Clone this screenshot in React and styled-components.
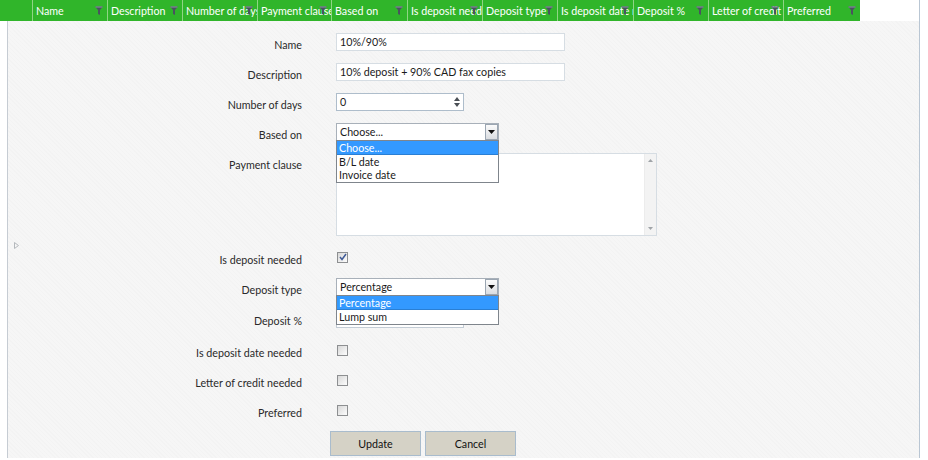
import React from "react";
import styled, { createGlobalStyle } from "styled-components";

const Global = createGlobalStyle`
  html, body { margin: 0; padding: 0; background: #ffffff; }
  body { font-family: Lato, "Open Sans", sans-serif; font-size: 10.7px; color: #222; }
`;

const Frame = styled.div`
  width: 919px;
  height: 458px;
  border-right: 1px solid #b9c6d3;
  display: flex;
  flex-direction: column;
`;

const HeaderBar = styled.div`
  display: flex;
  height: 21px;
  width: 860px;
  background: #30b52a;
  flex: none;
`;

const HeaderCell = styled.div`
  position: relative;
  width: ${(p) => p.$w}px;
  box-sizing: border-box;
  border-left: ${(p) => (p.$first ? "none" : "1px solid #8fd585")};
  color: #ffffff;
  padding-left: 3px;
  line-height: 21px;
  white-space: nowrap;
  overflow: hidden;
  font-size: 10.7px;
`;

const FilterIcon = styled.svg`
  position: absolute;
  right: 4px;
  top: 6px;
  width: 8px;
  height: 9px;
`;

const Panel = styled.div`
  flex: 1;
  margin-left: 7px;
  border-left: 1px solid #c6ccd3;
  background-color: #f6f6f6;
  background-image: repeating-linear-gradient(45deg, rgba(0,0,0,0.012) 0 1px, transparent 1px 3px);
  display: flex;
`;

const Gutter = styled.div`
  width: 20px;
  flex: none;
  padding-top: 221px;
  padding-left: 6px;
  box-sizing: border-box;
`;

const Expander = styled.svg`
  width: 5px;
  height: 7px;
  display: block;
`;

const Form = styled.div`
  display: flex;
  flex-direction: column;
  padding-top: 6px;
`;

const Row = styled.div`
  display: flex;
  align-items: ${(p) => (p.$top ? "flex-start" : "center")};
  height: ${(p) => p.$h || 30}px;
  gap: 34px;
`;

const Label = styled.div`
  width: 274px;
  text-align: right;
  line-height: 14px;
  padding-top: 5px;
  margin-top: ${(p) => p.$mt || 0}px;
  color: #2a2a2a;
  white-space: nowrap;
`;

const Field = styled.div`
  position: relative;
  width: ${(p) => p.$w}px;
  height: ${(p) => p.$h || 18}px;
  box-sizing: border-box;
  border: 1px solid ${(p) => p.$border || "#d6dde3"};
  background: #fff;
  padding-left: 3px;
  line-height: 16px;
  color: #1a1a1a;
  margin-top: ${(p) => p.$mt || 0}px;
`;

const Spinner = styled.svg`
  position: absolute;
  right: 3px;
  top: 2px;
  width: 6px;
  height: 12px;
`;

const SelectWrap = styled.div`
  position: relative;
  width: 163px;
  height: 18px;
`;

const SelectBox = styled.div`
  height: 18px;
  box-sizing: border-box;
  border: 1px solid #a8b0b9;
  background: #fff;
  padding-left: 3px;
  line-height: 16px;
  color: #1a1a1a;
`;

const ArrowBtn = styled.div`
  position: absolute;
  right: 1px;
  top: 1px;
  width: 13px;
  height: 16px;
  box-sizing: border-box;
  border: 1px solid #9ba6b2;
  background: linear-gradient(#fbfbfb, #dadde1);
  display: flex;
  align-items: center;
  justify-content: center;
`;

const DropList = styled.div`
  position: absolute;
  left: 0;
  top: 17px;
  width: 163px;
  box-sizing: border-box;
  border: 1px solid #7f858c;
  background: #fff;
  z-index: 5;
  padding-bottom: 1px;
`;

const Option = styled.div`
  height: 13px;
  line-height: 13px;
  padding-left: 2px;
  background: ${(p) => (p.$active ? "#3399ff" : "transparent")};
  color: ${(p) => (p.$active ? "#fff" : "#1a1a1a")};
  border-bottom: ${(p) => (p.$active ? "1px solid #2a7fd4" : "none")};
`;

const TextArea = styled.div`
  width: 321px;
  height: 83px;
  box-sizing: border-box;
  border: 1px solid #d6dde3;
  background: #fff;
  margin-top: 6px;
  display: flex;
  justify-content: flex-end;
`;

const ScrollBar = styled.div`
  width: 11px;
  background: #f3f3f3;
  border-left: 1px solid #ececec;
  display: flex;
  flex-direction: column;
  justify-content: space-between;
  align-items: center;
  padding: 5px 0;
`;

const Check = styled.div`
  width: 11px;
  height: 11px;
  box-sizing: border-box;
  margin-left: 1px;
  border: 1px solid #8d8f91;
  background: linear-gradient(135deg, #d8d8d8, #fdfdfd);
  display: flex;
  align-items: center;
  justify-content: center;
`;

const ButtonRow = styled.div`
  display: flex;
  gap: 4px;
  margin-top: 6px;
  margin-left: 302px;
`;

const Button = styled.button`
  width: 91px;
  height: 25px;
  border: 1px solid #a9bccd;
  background: #d5d2c6;
  font-family: Lato, "Open Sans", sans-serif;
  font-size: 10.7px;
  color: #111;
  padding: 0;
`;

const columns = [
  { t: "", w: 32 },
  { t: "Name", w: 75 },
  { t: "Description", w: 75 },
  { t: "Number of days", w: 75 },
  { t: "Payment clause", w: 74 },
  { t: "Based on", w: 76 },
  { t: "Is deposit needed", w: 75 },
  { t: "Deposit type", w: 75 },
  { t: "Is deposit date needed", w: 76 },
  { t: "Deposit %", w: 75 },
  { t: "Letter of credit needed", w: 75 },
  { t: "Preferred", w: 77 },
];

const Funnel = () => (
  <FilterIcon viewBox="0 0 8 9">
    <path d="M0 0.5 H8 L5 4 V9 L3 8 V4 Z" fill="#4a5360" />
    <path d="M0.5 1 H7.5" stroke="#8a95a2" strokeWidth="1" />
  </FilterIcon>
);

const Arrow = () => (
  <svg width="7" height="4" viewBox="0 0 7 4">
    <path d="M0 0 H7 L3.5 4 Z" fill="#111" />
  </svg>
);

const CheckMark = () => (
  <svg width="8" height="8" viewBox="0 0 8 8">
    <path d="M1 4 L3 6.5 L7 1" fill="none" stroke="#3f5a96" strokeWidth="1.5" />
  </svg>
);

const Tri = ({ up }) => (
  <svg width="5" height="3" viewBox="0 0 5 3">
    <path d={up ? "M0 3 H5 L2.5 0 Z" : "M0 0 H5 L2.5 3 Z"} fill="#a0a4a8" />
  </svg>
);

export default function App() {
  return (
    <>
      <Global />
      <Frame>
        <HeaderBar>
          {columns.map((c, i) => (
            <HeaderCell key={i} $w={c.w} $first={i === 0}>
              {c.t}
              {i > 0 && <Funnel />}
            </HeaderCell>
          ))}
        </HeaderBar>
        <Panel>
          <Gutter>
            <Expander viewBox="0 0 5 7">
              <path d="M0.5 0.5 L4.5 3.5 L0.5 6.5 Z" fill="none" stroke="#b4b8bc" strokeWidth="1" />
            </Expander>
          </Gutter>
          <Form>
            <Row>
              <Label>Name</Label>
              <Field $w={229}>10%/90%</Field>
            </Row>
            <Row>
              <Label>Description</Label>
              <Field $w={229}>10% deposit + 90% CAD fax copies</Field>
            </Row>
            <Row>
              <Label>Number of days</Label>
              <Field $w={128} $border="#aebdcb">
                0
                <Spinner viewBox="0 0 6 12">
                  <path d="M0 5 H6 L3 1 Z" fill="#4a4f55" />
                  <path d="M0 7 H6 L3 11 Z" fill="#4a4f55" />
                </Spinner>
              </Field>
            </Row>
            <Row>
              <Label>Based on</Label>
              <SelectWrap>
                <SelectBox>Choose...</SelectBox>
                <ArrowBtn><Arrow /></ArrowBtn>
                <DropList>
                  <Option $active>Choose...</Option>
                  <Option>B/L date</Option>
                  <Option>Invoice date</Option>
                </DropList>
              </SelectWrap>
            </Row>
            <Row $top $h={95}>
              <Label $mt={6}>Payment clause</Label>
              <TextArea>
                <ScrollBar>
                  <Tri up />
                  <Tri />
                </ScrollBar>
              </TextArea>
            </Row>
            <Row>
              <Label>Is deposit needed</Label>
              <Check><CheckMark /></Check>
            </Row>
            <Row>
              <Label>Deposit type</Label>
              <SelectWrap>
                <SelectBox>Percentage</SelectBox>
                <ArrowBtn><Arrow /></ArrowBtn>
                <DropList>
                  <Option $active>Percentage</Option>
                  <Option>Lump sum</Option>
                </DropList>
              </SelectWrap>
            </Row>
            <Row $h={33}>
              <Label>Deposit %</Label>
              <Field $w={128} $border="#c3ccd5" />
            </Row>
            <Row>
              <Label>Is deposit date needed</Label>
              <Check />
            </Row>
            <Row>
              <Label>Letter of credit needed</Label>
              <Check />
            </Row>
            <Row>
              <Label>Preferred</Label>
              <Check />
            </Row>
            <ButtonRow>
              <Button>Update</Button>
              <Button>Cancel</Button>
            </ButtonRow>
          </Form>
        </Panel>
      </Frame>
    </>
  );
}
